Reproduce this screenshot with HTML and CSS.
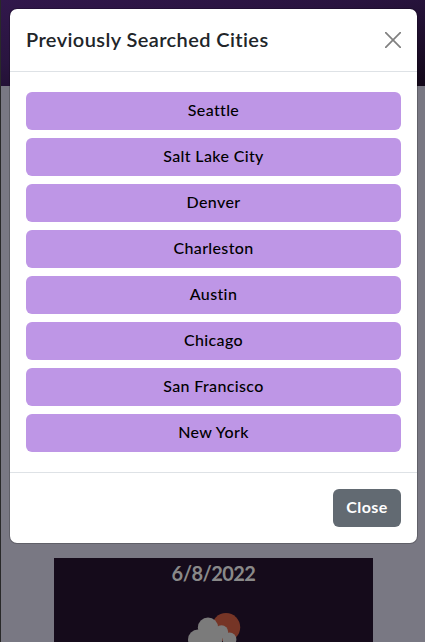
FILE: index.html
```html
<!DOCTYPE html>
<html lang="en">
<head>
<meta charset="utf-8">
<title>Weather</title>
<link rel="stylesheet" href="styles.css">
</head>
<body>
<div class="page">
  <header class="banner"></header>
  <main class="forecast">
    <section class="day">
      <h2 class="date">6/8/2022</h2>
      <svg class="weather" width="53" height="30" viewBox="0 0 53 30">
        <circle cx="38" cy="14.200" r="14.200" fill="#763526"/>
        <g fill="#7b7b7b">
          <circle cx="20" cy="14.700" r="10.200"/>
          <circle cx="10" cy="26.500" r="10"/>
          <circle cx="33.500" cy="19" r="6.700"/>
          <circle cx="41.500" cy="26.500" r="6.900"/>
          <path d="M10 18h24v12H10z"/>
        </g>
      </svg>
    </section>
  </main>
</div>
<div class="overlay">
  <div class="modal">
    <div class="modal-header">
      <h5 class="modal-title">Previously Searched Cities</h5>
      <button class="dismiss" aria-label="Close">
        <svg width="16" height="16" viewBox="0 0 16 16"><path d="M.7.7l14.600 14.600M15.300.7L.7 15.300" stroke="#808080" stroke-width="1.700" stroke-linecap="round"/></svg>
      </button>
    </div>
    <div class="modal-body">
      <button class="city">Seattle</button>
      <button class="city">Salt Lake City</button>
      <button class="city">Denver</button>
      <button class="city">Charleston</button>
      <button class="city">Austin</button>
      <button class="city">Chicago</button>
      <button class="city">San Francisco</button>
      <button class="city">New York</button>
    </div>
    <div class="modal-footer"><button class="close">Close</button></div>
  </div>
</div>
</body>
</html>
```
FILE: styles.css
```css
* { box-sizing: border-box; }
body {
  margin: 0;
  height: 642px;
  overflow: hidden;
  font-family: Lato, sans-serif;
  font-size: 16px;
  line-height: 24px;
  font-variant-ligatures: none;
}
button { font: inherit; border: 0; padding: 0; }
.page {
  height: 642px;
  background: #797883;
  border-left: 1px solid #292929;
}
.banner { height: 86px; background: linear-gradient(170deg, #31174b 0%, #29143f 40%, #130819 100%); }
.forecast { padding: 472px 52px 0 53px; }
.day {
  height: 100px;
  display: flex;
  flex-direction: column;
  align-items: center;
  background: #150b1b;
}
.date { margin: 3px 0 0; font-size: 20px; line-height: 24px; font-weight: 700; letter-spacing: -.55px; color: #898989; }
.weather { margin: 28px 0 0 2px; overflow: visible; }
.overlay { position: absolute; inset: 0; padding: 8px 7px 0 9px; }
.modal {
  height: 536px;
  background: #fff;
  background-clip: padding-box;
  border: 1px solid rgba(0, 0, 0, .2);
  border-radius: 8px;
}
.modal-header {
  height: 63px;
  padding: 0 16px;
  display: flex;
  align-items: center;
  justify-content: space-between;
  border-bottom: 1px solid #dee2e6;
}
.modal-title { margin: 0; padding-bottom: 2px; font-size: 20px; line-height: 30px; font-weight: 600; letter-spacing: .4px; color: #212529; }
.dismiss { width: 16px; height: 16px; background: none; }
.dismiss svg { display: block; }
.modal-body {
  height: 400px;
  padding: 20px 16px;
  display: flex;
  flex-direction: column;
  gap: 8px;
}
.city { height: 38px; padding-bottom: 2px; border-radius: 6px; background: #be96e6; color: #000; font-weight: 500; letter-spacing: .36px; }
.modal-footer {
  padding: 16px;
  display: flex;
  justify-content: flex-end;
  border-top: 1px solid #dee2e6;
}
.close { width: 68px; height: 38px; padding-bottom: 2px; border-radius: 6px; background: #626a72; color: #fff; font-weight: 700; letter-spacing: .45px; }
```
